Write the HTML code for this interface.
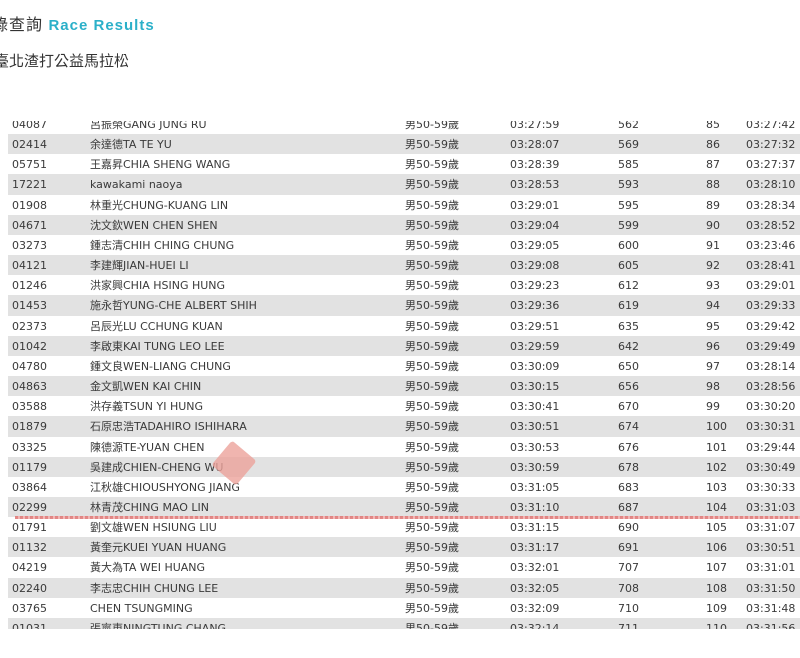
<!DOCTYPE html>
<html><head><meta charset="utf-8"><style>
body{margin:0;width:800px;height:658px;background:#fff;overflow:hidden;position:relative;font-family:"DejaVu Sans","Noto Sans CJK TC",sans-serif;color:#444}
.t1{position:absolute;left:-8px;top:11px;font-size:16px;letter-spacing:1px;color:#333;font-family:"Liberation Sans","Noto Sans CJK TC",sans-serif;white-space:nowrap}
.t1 b{color:#2bb0c9;font-family:"Liberation Sans",sans-serif;font-size:15px}
.t2{position:absolute;left:-6px;top:50px;font-size:15px;color:#333;font-family:"Liberation Sans","Noto Sans CJK TC",sans-serif;white-space:nowrap}
.wrap{position:absolute;left:8px;top:121px;width:792px;height:508px;overflow:hidden}
.in{position:absolute;left:0;top:-7px;width:800px}
.r{height:20.17px;position:relative;font-size:11px;line-height:21px;white-space:nowrap;color:#3a3a3a}
.r:nth-child(even){background:#e2e2e2}
.r span{position:absolute;top:0}
.a{left:4px}.b{left:82px}.c{left:397px}.d{left:502px}.e{left:610px}.f{left:698px}.g{left:738px}
.line{position:absolute;left:15px;top:516px;width:785px;height:3px;background:repeating-linear-gradient(90deg,#e07a78 0 3px,#f0b0ae 3px 5px);opacity:.9}
.dia{position:absolute;left:218px;top:447px;width:32px;height:32px;background:#eca39b;transform:rotate(40deg);opacity:.8;border-radius:3px}
</style></head><body>
<div class="t1">錄查詢 <b>Race Results</b></div>
<div class="t2">臺北渣打公益馬拉松</div>
<div class="wrap"><div class="in">
<div class="r"><span class="a">04087</span><span class="b">呂振榮GANG JUNG RU</span><span class="c">男50-59歲</span><span class="d">03:27:59</span><span class="e">562</span><span class="f">85</span><span class="g">03:27:42</span></div>
<div class="r"><span class="a">02414</span><span class="b">余達德TA TE YU</span><span class="c">男50-59歲</span><span class="d">03:28:07</span><span class="e">569</span><span class="f">86</span><span class="g">03:27:32</span></div>
<div class="r"><span class="a">05751</span><span class="b">王嘉昇CHIA SHENG WANG</span><span class="c">男50-59歲</span><span class="d">03:28:39</span><span class="e">585</span><span class="f">87</span><span class="g">03:27:37</span></div>
<div class="r"><span class="a">17221</span><span class="b">kawakami naoya</span><span class="c">男50-59歲</span><span class="d">03:28:53</span><span class="e">593</span><span class="f">88</span><span class="g">03:28:10</span></div>
<div class="r"><span class="a">01908</span><span class="b">林重光CHUNG-KUANG LIN</span><span class="c">男50-59歲</span><span class="d">03:29:01</span><span class="e">595</span><span class="f">89</span><span class="g">03:28:34</span></div>
<div class="r"><span class="a">04671</span><span class="b">沈文欽WEN CHEN SHEN</span><span class="c">男50-59歲</span><span class="d">03:29:04</span><span class="e">599</span><span class="f">90</span><span class="g">03:28:52</span></div>
<div class="r"><span class="a">03273</span><span class="b">鍾志清CHIH CHING CHUNG</span><span class="c">男50-59歲</span><span class="d">03:29:05</span><span class="e">600</span><span class="f">91</span><span class="g">03:23:46</span></div>
<div class="r"><span class="a">04121</span><span class="b">李建輝JIAN-HUEI LI</span><span class="c">男50-59歲</span><span class="d">03:29:08</span><span class="e">605</span><span class="f">92</span><span class="g">03:28:41</span></div>
<div class="r"><span class="a">01246</span><span class="b">洪家興CHIA HSING HUNG</span><span class="c">男50-59歲</span><span class="d">03:29:23</span><span class="e">612</span><span class="f">93</span><span class="g">03:29:01</span></div>
<div class="r"><span class="a">01453</span><span class="b">施永哲YUNG-CHE ALBERT SHIH</span><span class="c">男50-59歲</span><span class="d">03:29:36</span><span class="e">619</span><span class="f">94</span><span class="g">03:29:33</span></div>
<div class="r"><span class="a">02373</span><span class="b">呂辰光LU CCHUNG KUAN</span><span class="c">男50-59歲</span><span class="d">03:29:51</span><span class="e">635</span><span class="f">95</span><span class="g">03:29:42</span></div>
<div class="r"><span class="a">01042</span><span class="b">李啟東KAI TUNG LEO LEE</span><span class="c">男50-59歲</span><span class="d">03:29:59</span><span class="e">642</span><span class="f">96</span><span class="g">03:29:49</span></div>
<div class="r"><span class="a">04780</span><span class="b">鍾文良WEN-LIANG CHUNG</span><span class="c">男50-59歲</span><span class="d">03:30:09</span><span class="e">650</span><span class="f">97</span><span class="g">03:28:14</span></div>
<div class="r"><span class="a">04863</span><span class="b">金文凱WEN KAI CHIN</span><span class="c">男50-59歲</span><span class="d">03:30:15</span><span class="e">656</span><span class="f">98</span><span class="g">03:28:56</span></div>
<div class="r"><span class="a">03588</span><span class="b">洪存義TSUN YI HUNG</span><span class="c">男50-59歲</span><span class="d">03:30:41</span><span class="e">670</span><span class="f">99</span><span class="g">03:30:20</span></div>
<div class="r"><span class="a">01879</span><span class="b">石原忠浩TADAHIRO ISHIHARA</span><span class="c">男50-59歲</span><span class="d">03:30:51</span><span class="e">674</span><span class="f">100</span><span class="g">03:30:31</span></div>
<div class="r"><span class="a">03325</span><span class="b">陳德源TE-YUAN CHEN</span><span class="c">男50-59歲</span><span class="d">03:30:53</span><span class="e">676</span><span class="f">101</span><span class="g">03:29:44</span></div>
<div class="r"><span class="a">01179</span><span class="b">吳建成CHIEN-CHENG WU</span><span class="c">男50-59歲</span><span class="d">03:30:59</span><span class="e">678</span><span class="f">102</span><span class="g">03:30:49</span></div>
<div class="r"><span class="a">03864</span><span class="b">江秋雄CHIOUSHYONG JIANG</span><span class="c">男50-59歲</span><span class="d">03:31:05</span><span class="e">683</span><span class="f">103</span><span class="g">03:30:33</span></div>
<div class="r"><span class="a">02299</span><span class="b">林青茂CHING MAO LIN</span><span class="c">男50-59歲</span><span class="d">03:31:10</span><span class="e">687</span><span class="f">104</span><span class="g">03:31:03</span></div>
<div class="r"><span class="a">01791</span><span class="b">劉文雄WEN HSIUNG LIU</span><span class="c">男50-59歲</span><span class="d">03:31:15</span><span class="e">690</span><span class="f">105</span><span class="g">03:31:07</span></div>
<div class="r"><span class="a">01132</span><span class="b">黃奎元KUEI YUAN HUANG</span><span class="c">男50-59歲</span><span class="d">03:31:17</span><span class="e">691</span><span class="f">106</span><span class="g">03:30:51</span></div>
<div class="r"><span class="a">04219</span><span class="b">黃大為TA WEI HUANG</span><span class="c">男50-59歲</span><span class="d">03:32:01</span><span class="e">707</span><span class="f">107</span><span class="g">03:31:01</span></div>
<div class="r"><span class="a">02240</span><span class="b">李志忠CHIH CHUNG LEE</span><span class="c">男50-59歲</span><span class="d">03:32:05</span><span class="e">708</span><span class="f">108</span><span class="g">03:31:50</span></div>
<div class="r"><span class="a">03765</span><span class="b">CHEN TSUNGMING</span><span class="c">男50-59歲</span><span class="d">03:32:09</span><span class="e">710</span><span class="f">109</span><span class="g">03:31:48</span></div>
<div class="r"><span class="a">01031</span><span class="b">張寧東NINGTUNG CHANG</span><span class="c">男50-59歲</span><span class="d">03:32:14</span><span class="e">711</span><span class="f">110</span><span class="g">03:31:56</span></div>
</div></div>
<div class="line"></div>
<div class="dia"></div>
</body></html>
